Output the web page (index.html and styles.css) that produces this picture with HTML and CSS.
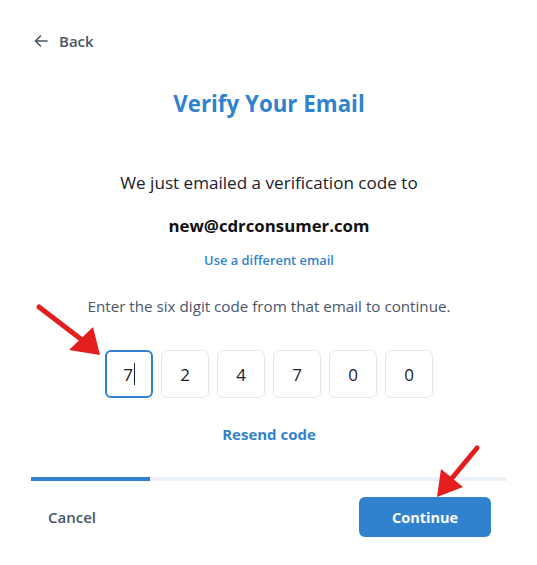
FILE: index.html
```html
<!DOCTYPE html>
<html>
<head>
<meta charset="utf-8">
<link rel="stylesheet" href="styles.css">
</head>
<body>
<div class="modal">
  <div class="back">
    <svg class="back-icon" width="16" height="16" viewBox="0 0 16 16"><path d="M14 8H2.5M7.5 3L2.5 8l5 5" fill="none" stroke="#4a5568" stroke-width="1.6" stroke-linecap="round" stroke-linejoin="round"/></svg>
    <span>Back</span>
  </div>
  <h1 class="title">Verify Your Email</h1>
  <p class="lead">We just emailed a verification code to</p>
  <p class="email">new@cdrconsumer.com</p>
  <a class="link small">Use a different email</a>
  <p class="hint">Enter the six digit code from that email to continue.</p>
  <div class="codes">
    <div class="box active">7<span class="caret"></span></div>
    <div class="box">2</div>
    <div class="box">4</div>
    <div class="box">7</div>
    <div class="box">0</div>
    <div class="box">0</div>
  </div>
  <a class="link resend">Resend code</a>
  <div class="progress"><div class="progress-fill"></div></div>
  <div class="footer">
    <span class="cancel">Cancel</span>
    <button class="continue">Continue</button>
  </div>
</div>
<svg class="arrow arrow-1" width="537" height="565" viewBox="0 0 537 565">
  <line x1="39" y1="307" x2="86" y2="343" stroke="#e41e1e" stroke-width="5" stroke-linecap="round"/>
  <polygon points="100,355 69,350 93,327" fill="#e41e1e"/>
  <line x1="477" y1="448" x2="448" y2="483" stroke="#e41e1e" stroke-width="5" stroke-linecap="round"/>
  <polygon points="437,497 441,469 463,487" fill="#e41e1e"/>
</svg>
</body>
</html>
```
FILE: styles.css
```css
html, body {
  margin: 0;
  padding: 0;
  background: #ffffff;
}
body {
  font-family: "Open Sans", "Noto Sans", sans-serif;
  color: #1a202c;
  width: 537px;
  height: 565px;
  position: relative;
  overflow: hidden;
}
.modal {
  padding: 0 30px 0 31px;
  display: flex;
  flex-direction: column;
  align-items: center;
}
.back {
  align-self: flex-start;
  display: flex;
  align-items: center;
  gap: 10px;
  margin-top: 31px;
  margin-left: 2px;
  font-size: 15px;
  font-weight: 600;
  color: #4a5568;
  height: 20px;
}
.title {
  margin: 39px 0 0;
  font-size: 22.3px;
  font-weight: 700;
  color: #3182ce;
  line-height: 28px;
}
.lead {
  margin: 53px 0 0;
  font-size: 17.1px;
  line-height: 23px;
  color: #1a202c;
}
.email {
  margin: 21px 0 0;
  font-size: 16.8px;
  font-weight: 700;
  line-height: 22px;
  color: #111111;
}
.link {
  color: #3182ce;
  font-weight: 600;
}
.small {
  margin-top: 14px;
  font-size: 12.9px;
  line-height: 18px;
}
.hint {
  margin: 27px 0 0;
  font-size: 15.2px;
  line-height: 20px;
  color: #4a5568;
}
.codes {
  margin-top: 34px;
  display: flex;
  gap: 8px;
}
.box {
  width: 46px;
  height: 46px;
  border: 1px solid #e2e8f0;
  border-radius: 6px;
  display: flex;
  align-items: center;
  justify-content: center;
  font-size: 17px;
  color: #1a202c;
}
.box.active {
  width: 44px;
  height: 44px;
  border: 2px solid #3182ce;
  position: relative;
}
.caret {
  display: inline-block;
  width: 1px;
  height: 22px;
  background: #1a202c;
  margin-left: 1px;
}
.resend {
  margin-top: 26px;
  font-size: 15px;
  font-weight: 700;
  line-height: 20px;
}
.progress {
  align-self: stretch;
  margin-top: 33px;
  height: 4px;
  background: #edf2f7;
}
.progress-fill {
  width: 119px;
  height: 4px;
  background: #3182ce;
}
.footer {
  align-self: stretch;
  display: flex;
  justify-content: space-between;
  align-items: center;
  margin-top: 16px;
  padding: 0 16px 0 17px;
}
.cancel {
  font-size: 15px;
  font-weight: 600;
  color: #4a5568;
}
.continue {
  width: 132px;
  height: 40px;
  border: none;
  border-radius: 6px;
  background: #3182ce;
  color: #ffffff;
  font-family: inherit;
  font-size: 14.5px;
  font-weight: 700;
}
.arrow {
  position: absolute;
  left: 0;
  top: 0;
  pointer-events: none;
}
```
